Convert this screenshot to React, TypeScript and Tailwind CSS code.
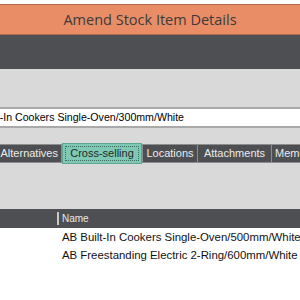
import React from "react";

export default function App() {
  return (
    <div className="w-[300px] h-[300px] overflow-hidden bg-white" style={{ fontFamily: '"Liberation Sans", Arial, sans-serif' }}>
      <div className="h-[4px] bg-white" />
      <div className="h-[31px] bg-[#e98d66] border-y border-[#b0694d] flex items-center justify-center">
        <span className="text-[14.5px] text-[#3b3b3b] pt-[1px]" style={{ fontFamily: '"Open Sans", sans-serif' }}>Amend Stock Item Details</span>
      </div>
      <div className="h-[34px] bg-[#4d4f53]" />
      <div className="bg-[#d9d9d9] pt-[38px] h-[140px] flex flex-col">
        <div className="h-[21px] bg-white border-y-2 border-[#a9a9a9] flex items-center overflow-hidden whitespace-nowrap">
          <span className="text-[10.6px] text-black ml-[-38px]">AB Built-In Cookers Single-Oven/300mm/White</span>
        </div>
        <div className="mt-[15px] flex items-center h-[21px] whitespace-nowrap">
          <div className="h-[19px] w-[62px] shrink-0 bg-[#4d4f53] border border-l-0 border-[#8d8d8d] flex items-center justify-end pr-[3px] text-[11px] text-[#ececec] overflow-hidden">Alternatives</div>
          <div className="h-[21px] w-[80px] shrink-0 bg-[#7ec8b4] border border-[#5fa593] flex items-center justify-center">
            <div className="border border-dotted border-[#3f6b60] px-[4px] h-[15px] flex items-center text-[11px] text-[#1f2a2a]">Cross-selling</div>
          </div>
          <div className="h-[19px] w-[56px] shrink-0 bg-[#4d4f53] border border-[#8d8d8d] flex items-center justify-center text-[11px] text-[#ececec]">Locations</div>
          <div className="h-[19px] w-[74px] shrink-0 bg-[#4d4f53] border border-l-0 border-[#8d8d8d] flex items-center justify-center text-[11px] text-[#ececec]">Attachments</div>
          <div className="h-[19px] w-[40px] shrink-0 bg-[#4d4f53] border border-l-0 border-[#8d8d8d] flex items-center pl-[3px] text-[11px] text-[#ececec] overflow-hidden">Memo</div>
        </div>
      </div>
      <div className="h-[19px] bg-[#4d4f53] flex items-center">
        <div className="w-[57px] shrink-0" />
        <div className="w-[2px] h-[13px] bg-[#c8c8c8]" />
        <span className="ml-[3px] text-[10px] text-[#e8e8e8]">Name</span>
      </div>
      <div className="bg-white pt-[1px]">
        {["AB Built-In Cookers Single-Oven/500mm/White", "AB Freestanding Electric 2-Ring/600mm/White"].map((t) => (
          <div key={t} className="h-[18px] flex items-center pl-[62px] whitespace-nowrap text-[11.4px] text-[#111]">{t}</div>
        ))}
      </div>
    </div>
  );
}
